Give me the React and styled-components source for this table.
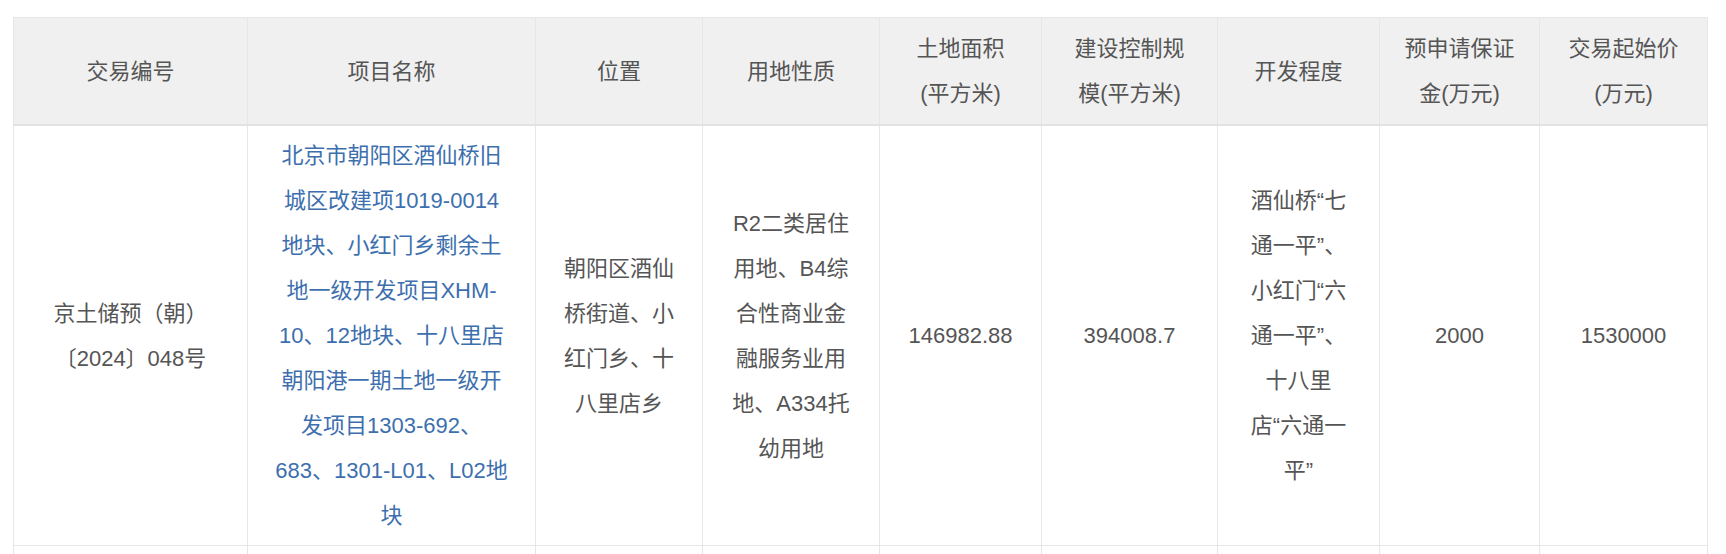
import React from "react";
import styled, { createGlobalStyle } from "styled-components";

const GlobalStyle = createGlobalStyle`
  html, body {
    margin: 0;
    padding: 0;
    background: #fff;
  }
  body {
    font-family: "Liberation Sans", "Noto Sans CJK SC", sans-serif;
  }
`;

const Page = styled.div`
  padding: 17px 0 0 13px;
`;

const Table = styled.table`
  width: 1695px;
  table-layout: fixed;
  border-collapse: collapse;
  font-size: 22px;
  line-height: 45px;
  color: #555;
`;

const HeadCell = styled.th`
  background: #f0f0f0;
  font-weight: normal;
  color: #555;
  padding: 8px 24px;
  border: 1px solid #e6e6e6;
  border-bottom: 2px solid #e2e2e2;
  text-align: center;
  vertical-align: middle;
`;

const Cell = styled.td`
  padding: 7px 25px;
  border: 1px solid #e6e6e6;
  text-align: center;
  vertical-align: middle;
  height: ${({ $height }) => ($height ? `${$height}px` : "auto")};
`;

const ProjectLink = styled.a`
  color: #3d6fae;
  text-decoration: none;
  cursor: pointer;
`;

const widths = [234, 288, 167, 177, 162, 176, 162, 160, 168];

const headers = [
  "交易编号",
  "项目名称",
  "位置",
  "用地性质",
  "土地面积(平方米)",
  "建设控制规模(平方米)",
  "开发程度",
  "预申请保证金(万元)",
  "交易起始价(万元)",
];

const row = {
  code: "京土储预（朝）〔2024〕048号",
  name:
    "北京市朝阳区酒仙桥旧城区改建项1019-0014地块、小红门乡剩余土地一级开发项目XHM-10、12地块、十八里店朝阳港一期土地一级开发项目1303-692、683、1301-L01、L02地块",
  location: "朝阳区酒仙桥街道、小红门乡、十八里店乡",
  usage: "R2二类居住用地、B4综合性商业金融服务业用地、A334托幼用地",
  area: "146982.88",
  scale: "394008.7",
  level: "酒仙桥“七通一平”、小红门“六通一平”、十八里店“六通一平”",
  deposit: "2000",
  price: "1530000",
};

export default function App() {
  return (
    <Page>
      <GlobalStyle />
      <Table>
        <colgroup>
          {widths.map((w, i) => (
            <col key={i} style={{ width: w }} />
          ))}
        </colgroup>
        <thead>
          <tr>
            {headers.map((h) => (
              <HeadCell key={h}>{h}</HeadCell>
            ))}
          </tr>
        </thead>
        <tbody>
          <tr>
            <Cell>{row.code}</Cell>
            <Cell>
              <ProjectLink>{row.name}</ProjectLink>
            </Cell>
            <Cell>{row.location}</Cell>
            <Cell>{row.usage}</Cell>
            <Cell>{row.area}</Cell>
            <Cell>{row.scale}</Cell>
            <Cell>{row.level}</Cell>
            <Cell>{row.deposit}</Cell>
            <Cell>{row.price}</Cell>
          </tr>
          <tr>
            {widths.map((w, i) => (
              <Cell key={i} $height={60} />
            ))}
          </tr>
        </tbody>
      </Table>
    </Page>
  );
}
